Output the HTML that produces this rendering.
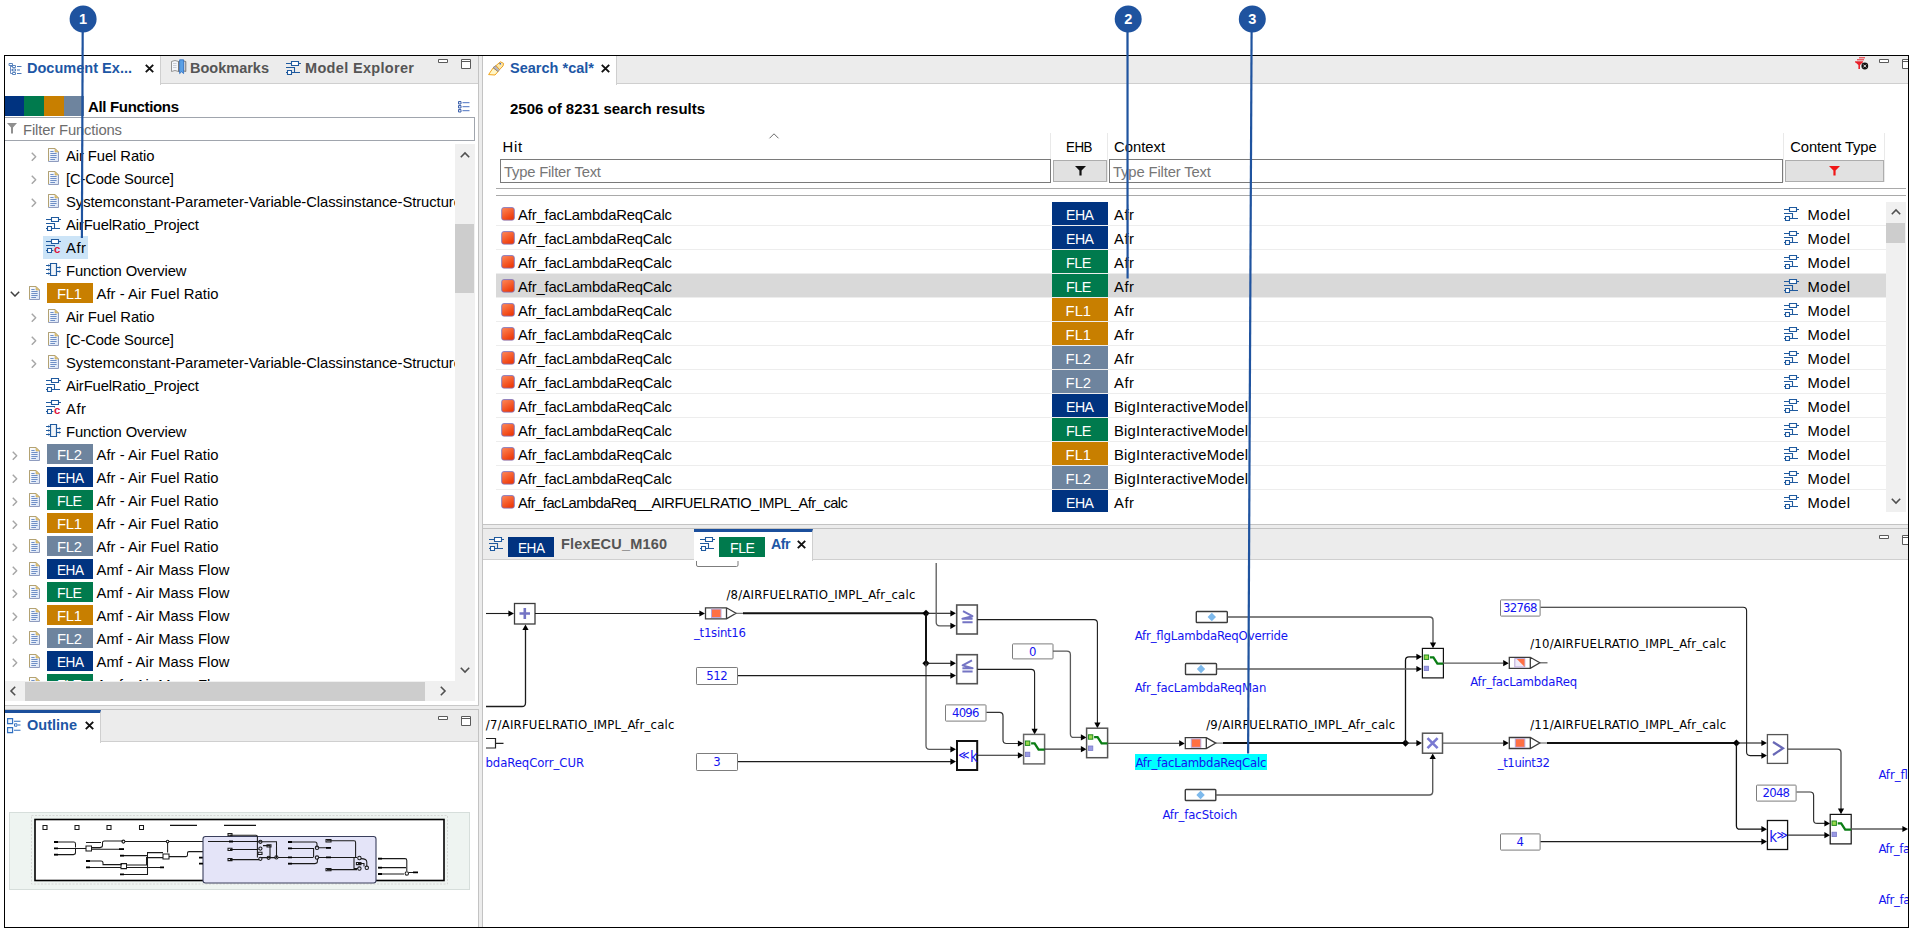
<!DOCTYPE html>
<html lang="en"><head><meta charset="utf-8"><title>Search results and model view</title>
<style>
html,body{margin:0;padding:0;background:#fff;}
body{width:1914px;height:932px;position:relative;overflow:hidden;font-family:"Liberation Sans", Arial, sans-serif;}
div{position:absolute;box-sizing:border-box;}
svg{position:absolute;left:0;top:0;overflow:visible;}
.t{position:absolute;white-space:pre;line-height:20px;font-family:"Liberation Sans", Arial, sans-serif;color:#000;}
.b{font-weight:bold;}
.d{font-family:"DejaVu Sans Condensed", "DejaVu Sans", "Liberation Sans", sans-serif;}
.clip{overflow:hidden;}
</style></head>
<body>
<section aria-label="Document Explorer and Outline">
<svg width="0" height="0" aria-hidden="true"><defs>
<linearGradient id="gDoc" x1="0" y1="0" x2="1" y2="1"><stop offset="0" stop-color="#ffffff"/><stop offset="1" stop-color="#d9e4f6"/></linearGradient>
<linearGradient id="gRed" x1="0" y1="0" x2="0.6" y2="1"><stop offset="0" stop-color="#ff8a5a"/><stop offset="1" stop-color="#ee3a0a"/></linearGradient>
<symbol id="iDoc" viewBox="0 0 11 14"><path d="M0.5 0.5H7L10.5 4V13.5H0.5Z" fill="url(#gDoc)" stroke="#8f9cbf"/><path d="M0.5 13V0.5H7" fill="none" stroke="#b3a272"/><path d="M7 0.5V4H10.5Z" fill="#e3c878" stroke="#c2a65a" stroke-width="0.6"/><path d="M2.3 3.5H5.6M2.3 5.5H8.6M2.3 7.5H8.6M2.3 9.5H8.6M2.3 11.5H7" stroke="#6f8fc6" stroke-width="1" fill="none"/></symbol>
<symbol id="iModel" viewBox="0 0 15 15"><path d="M5.5 0.5H12.5V4.5H5.5Z" fill="#fff" stroke="#1f5a9e" stroke-width="1.1"/><path d="M0 2.5H5.5M12.5 2.5H15M0 6.5H9M8.5 6.5V11.5M5.5 11.5H14M0 11.5H1.5" stroke="#1f5a9e" stroke-width="1.1" fill="none"/><path d="M1.5 9.5H5.5V13.5H1.5Z" fill="#fff" stroke="#1f5a9e" stroke-width="1.1"/></symbol>
<symbol id="iModelC" viewBox="0 0 15 15"><path d="M5.5 0.5H12.5V4.5H5.5Z" fill="#fff" stroke="#1f5a9e" stroke-width="1.1"/><path d="M0 2.5H5.5M12.5 2.5H15M0 6.5H8.5V7.6M0 11.5H1.5M5.5 11.5H7.4" stroke="#1f5a9e" stroke-width="1.1" fill="none"/><path d="M1.5 9.5H5.5V13.5H1.5Z" fill="#fff" stroke="#1f5a9e" stroke-width="1.1"/><text x="8" y="14" font-size="11.4" font-weight="bold" fill="#dc143c" font-family="'Liberation Sans', Arial, sans-serif">c</text></symbol>
<symbol id="iFunc" viewBox="0 0 15 15"><path d="M4.5 0.5H10.5V12.5H4.5Z" fill="#f2f5f9" stroke="#1f5a9e" stroke-width="1.2"/><path d="M0 2.5H4M0 6.5H4M0 10.5H4M10.8 4.5H14.6M10.8 8.5H14.6" stroke="#1f5a9e" stroke-width="1.1"/><path d="M2 1.2L3.9 2.5L2 3.8ZM2 5.2L3.9 6.5L2 7.8ZM2 9.2L3.9 10.5L2 11.8ZM12.9 3.2L14.9 4.5L12.9 5.8ZM12.9 7.2L14.9 8.5L12.9 9.8Z" fill="#1f5a9e"/></symbol>
<symbol id="iChevR" viewBox="0 0 6 10"><path d="M0.8 0.8L5 5L0.8 9.2" fill="none" stroke="#a6a6a6" stroke-width="1.5"/></symbol>
<symbol id="iChevD" viewBox="0 0 10 6"><path d="M0.8 0.8L5 5L9.2 0.8" fill="none" stroke="#404040" stroke-width="1.5"/></symbol>
<symbol id="iClose" viewBox="0 0 9 9"><path d="M0.8 0.8L8.2 8.2M8.2 0.8L0.8 8.2" stroke="#111" stroke-width="1.9" fill="none"/></symbol>
<symbol id="iMin" viewBox="0 0 10 4"><path d="M0.5 0.5H9.5V3.5H0.5Z" fill="#fff" stroke="#5a5a5a"/></symbol>
<symbol id="iMax" viewBox="0 0 10 10"><path d="M0.5 0.5H9.5V9.5H0.5Z" fill="#fff" stroke="#5a5a5a"/><path d="M0.5 2.5H9.5" stroke="#5a5a5a"/></symbol>
<symbol id="iRed" viewBox="0 0 14 14"><rect x="0.6" y="0.6" width="12.8" height="12.8" rx="2.2" fill="url(#gRed)" stroke="#7d78c4" stroke-width="0.9"/></symbol>
</defs></svg>
<div style="left:4px;top:55px;width:1905px;height:873px;border:1px solid #000;"></div>
<div style="left:5px;top:56px;width:473px;height:28px;background:#ececec;border-bottom:1px solid #cfcfcf;"></div>
<div style="left:478px;top:56px;width:1px;height:871px;background:#c3c3c3;"></div>
<div style="left:479px;top:56px;width:3px;height:871px;background:#ececec;"></div>
<div style="left:482px;top:56px;width:1px;height:871px;background:#c3c3c3;"></div>
<div style="left:5px;top:56px;width:156px;height:29px;background:#fff;border-right:1px solid #cfcfcf;"></div>
<svg width="13" height="12" style="left:9px;top:62.5px"><path d="M1.5 0V10.5M1.5 3.5H4M1.5 7H4M1.5 10.5H4" stroke="#6f8fc6" fill="none"/><path d="M0 0.5H3.5V2.5H0ZM3.5 2.5H6.5V4.5H3.5ZM3.5 6H6.5V8H3.5ZM3.5 9.5H6.5V11.5H3.5Z" fill="#fff" stroke="#4a78b8" stroke-width="0.9"/><path d="M8 3.5H12.5M8 7H11M8 10.5H12.5" stroke="#4a78b8"/></svg>
<span class="t b" style="left:27.0px;top:57.6px;font-size:14.5px;letter-spacing:0.020px;color:#1d57a5;">Document Ex...</span>
<svg width="9" height="9" style="left:145px;top:63.5px"><use href="#iClose"/></svg>
<svg width="16" height="16" style="left:171px;top:59px"><path d="M0.5 2.5L4 1.5L7.5 2.5V12.5L4 11.5L0.5 12.5Z" fill="#f4f6fa" stroke="#8a8a8a" stroke-width="0.9"/><path d="M7.5 2.5L11 1.5L14.8 2.5V12.5L11 11.5L7.5 12.5Z" fill="#cfd3da" stroke="#6e6e6e" stroke-width="0.9"/><path d="M8.6 0.8H12.6V14.6L10.6 12.8L8.6 14.6Z" fill="#5aa0e6" stroke="#2b6cc0" stroke-width="0.8"/><path d="M2 4.5H5.5M2 6.5H5.5M2 8.5H5.5" stroke="#b8bcc4" stroke-width="0.7"/></svg>
<span class="t b" style="left:190.0px;top:57.6px;font-size:14.5px;color:#555;">Bookmarks</span>
<svg width="15" height="15" style="left:286px;top:61px"><use href="#iModel"/></svg>
<span class="t b" style="left:305.0px;top:57.6px;font-size:14.5px;letter-spacing:0.328px;color:#555;">Model Explorer</span>
<svg width="10" height="4" style="left:438px;top:59px"><use href="#iMin"/></svg>
<svg width="10" height="10" style="left:461px;top:59px"><use href="#iMax"/></svg>
<div style="left:5px;top:96px;width:19px;height:20px;background:#003380;"></div>
<div style="left:24px;top:96px;width:20px;height:20px;background:#007a4d;"></div>
<div style="left:44px;top:96px;width:20px;height:20px;background:#c87f00;"></div>
<div style="left:64px;top:96px;width:20px;height:20px;background:#6e849e;"></div>
<span class="t b" style="left:88.0px;top:96.8px;font-size:15px;letter-spacing:-0.333px;">All Functions</span>
<svg width="12" height="12" style="left:458px;top:101px"><path d="M0.5 0.5H3V3H0.5ZM0.5 4.5H3V7H0.5ZM0.5 8.5H3V11H0.5Z" fill="#dfe7f5" stroke="#3f63ad"/><path d="M4.5 1.7H11.5M4.5 5.7H11.5M4.5 9.7H11.5" stroke="#4a72c0"/></svg>
<div style="left:5px;top:117px;width:470px;height:24px;background:#fff;border:1px solid #a0a5ad;border-left:none;"></div>
<svg width="10" height="11" style="left:7px;top:123px"><path d="M0 0H10L6 4.5V10.5H4V4.5Z" fill="#8f8f8f"/></svg>
<span class="t" style="left:23.0px;top:119.9px;font-size:14.8px;letter-spacing:-0.144px;color:#6d6d6d;">Filter Functions</span>
<div class="clip" style="left:5px;top:141px;width:450px;height:540px">
<svg width="5.7" height="9.5" style="left:26.2px;top:10.5px"><use href="#iChevR"/></svg>
<svg width="11" height="14" style="left:43px;top:7px"><use href="#iDoc"/></svg>
<span class="t" style="left:61.0px;top:4.9px;font-size:14.8px;letter-spacing:-0.089px;">Air Fuel Ratio</span>
<svg width="5.7" height="9.5" style="left:26.2px;top:33.5px"><use href="#iChevR"/></svg>
<svg width="11" height="14" style="left:43px;top:30px"><use href="#iDoc"/></svg>
<span class="t" style="left:61.0px;top:27.9px;font-size:14.8px;letter-spacing:-0.159px;">[C-Code Source]</span>
<svg width="5.7" height="9.5" style="left:26.2px;top:56.5px"><use href="#iChevR"/></svg>
<svg width="11" height="14" style="left:43px;top:53px"><use href="#iDoc"/></svg>
<span class="t" style="left:61.0px;top:50.9px;font-size:14.8px;letter-spacing:-0.062px;">Systemconstant-Parameter-Variable-Classinstance-Structure</span>
<svg width="15" height="15" style="left:41px;top:76px"><use href="#iModel"/></svg>
<span class="t" style="left:61.0px;top:73.9px;font-size:14.8px;letter-spacing:-0.143px;">AirFuelRatio_Project</span>
<div style="left:38px;top:95px;width:45px;height:23px;background:#cce4f7;"></div>
<svg width="15" height="15" style="left:41px;top:98px"><use href="#iModelC"/></svg>
<span class="t" style="left:61.0px;top:96.9px;font-size:14.8px;letter-spacing:0.544px;">Afr</span>
<svg width="15" height="15" style="left:41px;top:122px"><use href="#iFunc"/></svg>
<span class="t" style="left:61.0px;top:119.9px;font-size:14.8px;letter-spacing:-0.129px;">Function Overview</span>
<svg width="10" height="6" style="left:4.5px;top:149.5px"><use href="#iChevD"/></svg>
<svg width="11" height="14" style="left:24px;top:145px"><use href="#iDoc"/></svg>
<div style="left:42px;top:142px;width:46px;height:20px;background:#c87f00;"></div>
<span class="t" style="left:52.0px;top:142.9px;font-size:14.8px;letter-spacing:-0.252px;color:#fff;">FL1</span>
<span class="t" style="left:91.5px;top:142.9px;font-size:14.8px;letter-spacing:0.058px;">Afr - Air Fuel Ratio</span>
<svg width="5.7" height="9.5" style="left:26.2px;top:171.5px"><use href="#iChevR"/></svg>
<svg width="11" height="14" style="left:43px;top:168px"><use href="#iDoc"/></svg>
<span class="t" style="left:61.0px;top:165.9px;font-size:14.8px;letter-spacing:-0.089px;">Air Fuel Ratio</span>
<svg width="5.7" height="9.5" style="left:26.2px;top:194.5px"><use href="#iChevR"/></svg>
<svg width="11" height="14" style="left:43px;top:191px"><use href="#iDoc"/></svg>
<span class="t" style="left:61.0px;top:188.9px;font-size:14.8px;letter-spacing:-0.159px;">[C-Code Source]</span>
<svg width="5.7" height="9.5" style="left:26.2px;top:217.5px"><use href="#iChevR"/></svg>
<svg width="11" height="14" style="left:43px;top:214px"><use href="#iDoc"/></svg>
<span class="t" style="left:61.0px;top:211.9px;font-size:14.8px;letter-spacing:-0.062px;">Systemconstant-Parameter-Variable-Classinstance-Structure</span>
<svg width="15" height="15" style="left:41px;top:237px"><use href="#iModel"/></svg>
<span class="t" style="left:61.0px;top:234.9px;font-size:14.8px;letter-spacing:-0.143px;">AirFuelRatio_Project</span>
<svg width="15" height="15" style="left:41px;top:259px"><use href="#iModelC"/></svg>
<span class="t" style="left:61.0px;top:257.9px;font-size:14.8px;letter-spacing:0.544px;">Afr</span>
<svg width="15" height="15" style="left:41px;top:283px"><use href="#iFunc"/></svg>
<span class="t" style="left:61.0px;top:280.9px;font-size:14.8px;letter-spacing:-0.129px;">Function Overview</span>
<svg width="5.7" height="9.5" style="left:7.199999999999999px;top:309.5px"><use href="#iChevR"/></svg>
<svg width="11" height="14" style="left:24px;top:306px"><use href="#iDoc"/></svg>
<div style="left:42px;top:303px;width:46px;height:20px;background:#6e849e;"></div>
<span class="t" style="left:52.0px;top:303.9px;font-size:14.8px;letter-spacing:-0.252px;color:#fff;">FL2</span>
<span class="t" style="left:91.5px;top:303.9px;font-size:14.8px;letter-spacing:0.058px;">Afr - Air Fuel Ratio</span>
<svg width="5.7" height="9.5" style="left:7.199999999999999px;top:332.5px"><use href="#iChevR"/></svg>
<svg width="11" height="14" style="left:24px;top:329px"><use href="#iDoc"/></svg>
<div style="left:42px;top:326px;width:46px;height:20px;background:#003380;"></div>
<span class="t" style="left:52.0px;top:326.9px;font-size:14.8px;letter-spacing:-0.500px;color:#fff;transform:scaleX(0.9174);transform-origin:0 0;">EHA</span>
<span class="t" style="left:91.5px;top:326.9px;font-size:14.8px;letter-spacing:0.058px;">Afr - Air Fuel Ratio</span>
<svg width="5.7" height="9.5" style="left:7.199999999999999px;top:355.5px"><use href="#iChevR"/></svg>
<svg width="11" height="14" style="left:24px;top:352px"><use href="#iDoc"/></svg>
<div style="left:42px;top:349px;width:46px;height:20px;background:#007a4d;"></div>
<span class="t" style="left:52.0px;top:349.9px;font-size:14.8px;letter-spacing:-0.500px;color:#fff;transform:scaleX(0.9563);transform-origin:0 0;">FLE</span>
<span class="t" style="left:91.5px;top:349.9px;font-size:14.8px;letter-spacing:0.058px;">Afr - Air Fuel Ratio</span>
<svg width="5.7" height="9.5" style="left:7.199999999999999px;top:378.5px"><use href="#iChevR"/></svg>
<svg width="11" height="14" style="left:24px;top:375px"><use href="#iDoc"/></svg>
<div style="left:42px;top:372px;width:46px;height:20px;background:#c87f00;"></div>
<span class="t" style="left:52.0px;top:372.9px;font-size:14.8px;letter-spacing:-0.252px;color:#fff;">FL1</span>
<span class="t" style="left:91.5px;top:372.9px;font-size:14.8px;letter-spacing:0.058px;">Afr - Air Fuel Ratio</span>
<svg width="5.7" height="9.5" style="left:7.199999999999999px;top:401.5px"><use href="#iChevR"/></svg>
<svg width="11" height="14" style="left:24px;top:398px"><use href="#iDoc"/></svg>
<div style="left:42px;top:395px;width:46px;height:20px;background:#6e849e;"></div>
<span class="t" style="left:52.0px;top:395.9px;font-size:14.8px;letter-spacing:-0.252px;color:#fff;">FL2</span>
<span class="t" style="left:91.5px;top:395.9px;font-size:14.8px;letter-spacing:0.058px;">Afr - Air Fuel Ratio</span>
<svg width="5.7" height="9.5" style="left:7.199999999999999px;top:424.5px"><use href="#iChevR"/></svg>
<svg width="11" height="14" style="left:24px;top:421px"><use href="#iDoc"/></svg>
<div style="left:42px;top:418px;width:46px;height:20px;background:#003380;"></div>
<span class="t" style="left:52.0px;top:418.9px;font-size:14.8px;letter-spacing:-0.500px;color:#fff;transform:scaleX(0.9174);transform-origin:0 0;">EHA</span>
<span class="t" style="left:91.5px;top:418.9px;font-size:14.8px;letter-spacing:0.080px;">Amf - Air Mass Flow</span>
<svg width="5.7" height="9.5" style="left:7.199999999999999px;top:447.5px"><use href="#iChevR"/></svg>
<svg width="11" height="14" style="left:24px;top:444px"><use href="#iDoc"/></svg>
<div style="left:42px;top:441px;width:46px;height:20px;background:#007a4d;"></div>
<span class="t" style="left:52.0px;top:441.9px;font-size:14.8px;letter-spacing:-0.500px;color:#fff;transform:scaleX(0.9563);transform-origin:0 0;">FLE</span>
<span class="t" style="left:91.5px;top:441.9px;font-size:14.8px;letter-spacing:0.080px;">Amf - Air Mass Flow</span>
<svg width="5.7" height="9.5" style="left:7.199999999999999px;top:470.5px"><use href="#iChevR"/></svg>
<svg width="11" height="14" style="left:24px;top:467px"><use href="#iDoc"/></svg>
<div style="left:42px;top:464px;width:46px;height:20px;background:#c87f00;"></div>
<span class="t" style="left:52.0px;top:464.9px;font-size:14.8px;letter-spacing:-0.252px;color:#fff;">FL1</span>
<span class="t" style="left:91.5px;top:464.9px;font-size:14.8px;letter-spacing:0.080px;">Amf - Air Mass Flow</span>
<svg width="5.7" height="9.5" style="left:7.199999999999999px;top:493.5px"><use href="#iChevR"/></svg>
<svg width="11" height="14" style="left:24px;top:490px"><use href="#iDoc"/></svg>
<div style="left:42px;top:487px;width:46px;height:20px;background:#6e849e;"></div>
<span class="t" style="left:52.0px;top:487.9px;font-size:14.8px;letter-spacing:-0.252px;color:#fff;">FL2</span>
<span class="t" style="left:91.5px;top:487.9px;font-size:14.8px;letter-spacing:0.080px;">Amf - Air Mass Flow</span>
<svg width="5.7" height="9.5" style="left:7.199999999999999px;top:516.5px"><use href="#iChevR"/></svg>
<svg width="11" height="14" style="left:24px;top:513px"><use href="#iDoc"/></svg>
<div style="left:42px;top:510px;width:46px;height:20px;background:#003380;"></div>
<span class="t" style="left:52.0px;top:510.9px;font-size:14.8px;letter-spacing:-0.500px;color:#fff;transform:scaleX(0.9174);transform-origin:0 0;">EHA</span>
<span class="t" style="left:91.5px;top:510.9px;font-size:14.8px;letter-spacing:0.080px;">Amf - Air Mass Flow</span>
<svg width="5.7" height="9.5" style="left:7.199999999999999px;top:539.5px"><use href="#iChevR"/></svg>
<svg width="11" height="14" style="left:24px;top:536px"><use href="#iDoc"/></svg>
<div style="left:42px;top:533px;width:46px;height:20px;background:#007a4d;"></div>
<span class="t" style="left:52.0px;top:533.9px;font-size:14.8px;letter-spacing:-0.500px;color:#fff;transform:scaleX(0.9563);transform-origin:0 0;">FLE</span>
<span class="t" style="left:91.5px;top:533.9px;font-size:14.8px;letter-spacing:0.080px;">Amf - Air Mass Flow</span>
</div>
<div style="left:455px;top:144px;width:20px;height:557px;background:#f0f0f0;"></div>
<div style="left:455px;top:224px;width:19px;height:69px;background:#cdcdcd;"></div>
<svg width="10" height="6" style="left:460px;top:152px"><path d="M0.8 5.2L5 1L9.2 5.2" fill="none" stroke="#505050" stroke-width="1.6"/></svg>
<svg width="10" height="6" style="left:460px;top:667px"><path d="M0.8 0.8L5 5L9.2 0.8" fill="none" stroke="#505050" stroke-width="1.6"/></svg>
<div style="left:5px;top:681px;width:450px;height:20px;background:#f0f0f0;"></div>
<div style="left:25px;top:682px;width:400px;height:19px;background:#cdcdcd;"></div>
<svg width="6" height="10" style="left:10px;top:686px"><path d="M5.2 0.8L1 5L5.2 9.2" fill="none" stroke="#505050" stroke-width="1.6"/></svg>
<svg width="6" height="10" style="left:440px;top:686px"><path d="M0.8 0.8L5 5L0.8 9.2" fill="none" stroke="#505050" stroke-width="1.6"/></svg>
<div style="left:5px;top:705px;width:474px;height:1px;background:#c8c8c8;"></div>
<div style="left:5px;top:706px;width:477px;height:3px;background:#ececec;"></div>
<div style="left:5px;top:709px;width:474px;height:1px;background:#c3c3c3;"></div>
<div style="left:5px;top:710px;width:473px;height:32px;background:#ececec;border-bottom:1px solid #cfcfcf;"></div>
<div style="left:5px;top:710px;width:96px;height:33px;background:#fff;border-right:1px solid #cfcfcf;border-top:3px solid #1b4f9c;"></div>
<svg width="14" height="16" style="left:7px;top:718px"><path d="M0.6 0.6H5.6V5.6H0.6ZM0.6 9.6H5.6V14.6H0.6Z" fill="#eef4fc" stroke="#2f6fc0" stroke-width="1.15"/><path d="M7.5 5.8H10V8.2H7.5Z" fill="#fff" stroke="#2f6fc0" stroke-width="0.95"/><path d="M7 3.3H13.5M10.8 7H13.5M7 12.2H13.5" stroke="#2f6fc0" stroke-width="1.1"/></svg>
<span class="t b" style="left:27.0px;top:714.6px;font-size:14.5px;letter-spacing:0.010px;color:#1d57a5;">Outline</span>
<svg width="9" height="9" style="left:85px;top:721px"><use href="#iClose"/></svg>
<svg width="10" height="4" style="left:438px;top:716px"><use href="#iMin"/></svg>
<svg width="10" height="10" style="left:461px;top:716px"><use href="#iMax"/></svg>
</section>
<section aria-label="Search results">
<div style="left:483px;top:56px;width:1425px;height:28px;background:#ececec;border-bottom:1px solid #cfcfcf;"></div>
<div style="left:483px;top:56px;width:134px;height:29px;background:#fff;border-right:1px solid #cfcfcf;"></div>
<svg width="17" height="15" style="left:488px;top:61px"><path d="M0.6 13.6L5.2 6.8L10.2 10.4L7 14Z" fill="#fff6c8" stroke="#f3a61c" stroke-width="1"/><path d="M5 6.6L8 4.6L11.6 8.6L10 10.6Z" fill="#b9b6bd" stroke="#8a7a6a" stroke-width="0.8"/><path d="M8 4.6L12.4 0.8L15.6 2.4L15 5L11.6 8.6Z" fill="#ffe9a8" stroke="#e9a227" stroke-width="1"/><path d="M11.6 3.2L12.8 2.4" stroke="#2b55c5" stroke-width="1.4"/></svg>
<span class="t b" style="left:510.0px;top:57.6px;font-size:14.5px;letter-spacing:0.015px;color:#1d57a5;">Search *cal*</span>
<svg width="9" height="9" style="left:601px;top:63.5px"><use href="#iClose"/></svg>
<svg width="15" height="13" style="left:1854px;top:57px"><path d="M5 0.8H11M3 2.8H10M1 4.8H9" stroke="#e8202a" stroke-width="1"/><path d="M1 5H9L6 8V12H4.4V8Z" fill="#e8202a"/><circle cx="10.8" cy="9" r="3.4" fill="#111"/><path d="M9.4 7.6L12.2 10.4M12.2 7.6L9.4 10.4" stroke="#fff" stroke-width="0.9"/></svg>
<svg width="10" height="4" style="left:1879px;top:59px"><use href="#iMin"/></svg>
<svg width="6" height="10" style="left:1902px;top:59px"><path d="M6 0.5H0.5V9.5H6M0.5 2.5H6" fill="#fff" stroke="#5a5a5a"/></svg>
<span class="t b" style="left:510.0px;top:98.8px;font-size:15px;">2506 of 8231 search results</span>
<div style="left:1050px;top:133px;width:1px;height:49px;background:#e9e9e9;"></div>
<div style="left:1107px;top:133px;width:1px;height:49px;background:#e9e9e9;"></div>
<div style="left:1783px;top:133px;width:1px;height:49px;background:#e9e9e9;"></div>
<div style="left:1884px;top:133px;width:1px;height:49px;background:#e9e9e9;"></div>
<span class="t" style="left:502.5px;top:136.9px;font-size:14.8px;letter-spacing:0.706px;">Hit</span>
<svg width="10" height="6" style="left:768.5px;top:133px"><path d="M0.5 5.3L5 0.8L9.5 5.3" fill="none" stroke="#6a6a6a" stroke-width="1"/></svg>
<span class="t" style="left:1065.5px;top:136.9px;font-size:14.8px;letter-spacing:-0.500px;transform:scaleX(0.9004);transform-origin:0 0;">EHB</span>
<span class="t" style="left:1114.0px;top:136.9px;font-size:14.8px;">Context</span>
<span class="t" style="left:1790.3px;top:136.9px;font-size:14.8px;letter-spacing:-0.124px;">Content Type</span>
<div style="left:500px;top:159px;width:551px;height:24px;background:#fff;border:1px solid #7a7a7a;"></div>
<span class="t" style="left:504.0px;top:162.4px;font-size:14.8px;letter-spacing:-0.205px;color:#767676;">Type Filter Text</span>
<div style="left:1053px;top:160px;width:54px;height:22px;background:#e1e1e1;border:1px solid #adadad;"></div>
<svg width="11" height="10" style="left:1074.5px;top:166px"><path d="M0 0H11L6.6 4.4V9.6H4.4V4.4Z" fill="#111"/></svg>
<div style="left:1109px;top:159px;width:674px;height:24px;background:#fff;border:1px solid #7a7a7a;"></div>
<span class="t" style="left:1113.0px;top:162.4px;font-size:14.8px;letter-spacing:-0.138px;color:#767676;">Type Filter Text</span>
<div style="left:1785px;top:160px;width:99px;height:22px;background:#e1e1e1;border:1px solid #adadad;"></div>
<svg width="11" height="10" style="left:1828.5px;top:166px"><path d="M0 0H11L6.6 4.4V9.6H4.4V4.4Z" fill="#f01616"/></svg>
<div style="left:496px;top:188px;width:1410px;height:1px;background:#a9a9a9;"></div>
<div style="left:496px;top:195px;width:1410px;height:1px;background:#a9a9a9;"></div>
<div style="left:496px;top:225px;width:1390px;height:1px;background:#ededed;"></div>
<svg width="14" height="13.8" style="left:501px;top:207.3px"><use href="#iRed"/></svg>
<span class="t" style="left:518.0px;top:204.9px;font-size:14.8px;letter-spacing:-0.165px;">Afr_facLambdaReqCalc</span>
<div style="left:1052px;top:202px;width:56px;height:23px;background:#003380;"></div>
<span class="t" style="left:1065.6px;top:204.9px;font-size:14.8px;letter-spacing:-0.500px;color:#fff;transform:scaleX(0.9514);transform-origin:0 0;">EHA</span>
<span class="t" style="left:1114.0px;top:204.9px;font-size:14.8px;letter-spacing:0.544px;">Afr</span>
<svg width="15" height="15" style="left:1784px;top:207px"><use href="#iModel"/></svg>
<span class="t" style="left:1807.5px;top:204.9px;font-size:14.8px;letter-spacing:0.548px;">Model</span>
<div style="left:496px;top:249px;width:1390px;height:1px;background:#ededed;"></div>
<svg width="14" height="13.8" style="left:501px;top:231.3px"><use href="#iRed"/></svg>
<span class="t" style="left:518.0px;top:228.9px;font-size:14.8px;letter-spacing:-0.165px;">Afr_facLambdaReqCalc</span>
<div style="left:1052px;top:226px;width:56px;height:23px;background:#003380;"></div>
<span class="t" style="left:1065.6px;top:228.9px;font-size:14.8px;letter-spacing:-0.500px;color:#fff;transform:scaleX(0.9514);transform-origin:0 0;">EHA</span>
<span class="t" style="left:1114.0px;top:228.9px;font-size:14.8px;letter-spacing:0.544px;">Afr</span>
<svg width="15" height="15" style="left:1784px;top:231px"><use href="#iModel"/></svg>
<span class="t" style="left:1807.5px;top:228.9px;font-size:14.8px;letter-spacing:0.548px;">Model</span>
<div style="left:496px;top:273px;width:1390px;height:1px;background:#ededed;"></div>
<svg width="14" height="13.8" style="left:501px;top:255.3px"><use href="#iRed"/></svg>
<span class="t" style="left:518.0px;top:252.9px;font-size:14.8px;letter-spacing:-0.165px;">Afr_facLambdaReqCalc</span>
<div style="left:1052px;top:250px;width:56px;height:23px;background:#007a4d;"></div>
<span class="t" style="left:1065.6px;top:252.9px;font-size:14.8px;letter-spacing:-0.500px;color:#fff;transform:scaleX(0.9754);transform-origin:0 0;">FLE</span>
<span class="t" style="left:1114.0px;top:252.9px;font-size:14.8px;letter-spacing:0.544px;">Afr</span>
<svg width="15" height="15" style="left:1784px;top:255px"><use href="#iModel"/></svg>
<span class="t" style="left:1807.5px;top:252.9px;font-size:14.8px;letter-spacing:0.548px;">Model</span>
<div style="left:496px;top:274px;width:1390px;height:24px;background:#d9d9d9;"></div>
<div style="left:496px;top:297px;width:1390px;height:1px;background:#ededed;"></div>
<svg width="14" height="13.8" style="left:501px;top:279.3px"><use href="#iRed"/></svg>
<span class="t" style="left:518.0px;top:276.9px;font-size:14.8px;letter-spacing:-0.165px;">Afr_facLambdaReqCalc</span>
<div style="left:1052px;top:274px;width:56px;height:23px;background:#007a4d;"></div>
<span class="t" style="left:1065.6px;top:276.9px;font-size:14.8px;letter-spacing:-0.500px;color:#fff;transform:scaleX(0.9754);transform-origin:0 0;">FLE</span>
<span class="t" style="left:1114.0px;top:276.9px;font-size:14.8px;letter-spacing:0.544px;">Afr</span>
<svg width="15" height="15" style="left:1784px;top:279px"><use href="#iModel"/></svg>
<span class="t" style="left:1807.5px;top:276.9px;font-size:14.8px;letter-spacing:0.548px;">Model</span>
<div style="left:496px;top:321px;width:1390px;height:1px;background:#ededed;"></div>
<svg width="14" height="13.8" style="left:501px;top:303.3px"><use href="#iRed"/></svg>
<span class="t" style="left:518.0px;top:300.9px;font-size:14.8px;letter-spacing:-0.165px;">Afr_facLambdaReqCalc</span>
<div style="left:1052px;top:298px;width:56px;height:23px;background:#c87f00;"></div>
<span class="t" style="left:1065.6px;top:300.9px;font-size:14.8px;color:#fff;">FL1</span>
<span class="t" style="left:1114.0px;top:300.9px;font-size:14.8px;letter-spacing:0.544px;">Afr</span>
<svg width="15" height="15" style="left:1784px;top:303px"><use href="#iModel"/></svg>
<span class="t" style="left:1807.5px;top:300.9px;font-size:14.8px;letter-spacing:0.548px;">Model</span>
<div style="left:496px;top:345px;width:1390px;height:1px;background:#ededed;"></div>
<svg width="14" height="13.8" style="left:501px;top:327.3px"><use href="#iRed"/></svg>
<span class="t" style="left:518.0px;top:324.9px;font-size:14.8px;letter-spacing:-0.165px;">Afr_facLambdaReqCalc</span>
<div style="left:1052px;top:322px;width:56px;height:23px;background:#c87f00;"></div>
<span class="t" style="left:1065.6px;top:324.9px;font-size:14.8px;color:#fff;">FL1</span>
<span class="t" style="left:1114.0px;top:324.9px;font-size:14.8px;letter-spacing:0.544px;">Afr</span>
<svg width="15" height="15" style="left:1784px;top:327px"><use href="#iModel"/></svg>
<span class="t" style="left:1807.5px;top:324.9px;font-size:14.8px;letter-spacing:0.548px;">Model</span>
<div style="left:496px;top:369px;width:1390px;height:1px;background:#ededed;"></div>
<svg width="14" height="13.8" style="left:501px;top:351.3px"><use href="#iRed"/></svg>
<span class="t" style="left:518.0px;top:348.9px;font-size:14.8px;letter-spacing:-0.165px;">Afr_facLambdaReqCalc</span>
<div style="left:1052px;top:346px;width:56px;height:23px;background:#6e849e;"></div>
<span class="t" style="left:1065.6px;top:348.9px;font-size:14.8px;color:#fff;">FL2</span>
<span class="t" style="left:1114.0px;top:348.9px;font-size:14.8px;letter-spacing:0.544px;">Afr</span>
<svg width="15" height="15" style="left:1784px;top:351px"><use href="#iModel"/></svg>
<span class="t" style="left:1807.5px;top:348.9px;font-size:14.8px;letter-spacing:0.548px;">Model</span>
<div style="left:496px;top:393px;width:1390px;height:1px;background:#ededed;"></div>
<svg width="14" height="13.8" style="left:501px;top:375.3px"><use href="#iRed"/></svg>
<span class="t" style="left:518.0px;top:372.9px;font-size:14.8px;letter-spacing:-0.165px;">Afr_facLambdaReqCalc</span>
<div style="left:1052px;top:370px;width:56px;height:23px;background:#6e849e;"></div>
<span class="t" style="left:1065.6px;top:372.9px;font-size:14.8px;color:#fff;">FL2</span>
<span class="t" style="left:1114.0px;top:372.9px;font-size:14.8px;letter-spacing:0.544px;">Afr</span>
<svg width="15" height="15" style="left:1784px;top:375px"><use href="#iModel"/></svg>
<span class="t" style="left:1807.5px;top:372.9px;font-size:14.8px;letter-spacing:0.548px;">Model</span>
<div style="left:496px;top:417px;width:1390px;height:1px;background:#ededed;"></div>
<svg width="14" height="13.8" style="left:501px;top:399.3px"><use href="#iRed"/></svg>
<span class="t" style="left:518.0px;top:396.9px;font-size:14.8px;letter-spacing:-0.165px;">Afr_facLambdaReqCalc</span>
<div style="left:1052px;top:394px;width:56px;height:23px;background:#003380;"></div>
<span class="t" style="left:1065.6px;top:396.9px;font-size:14.8px;letter-spacing:-0.500px;color:#fff;transform:scaleX(0.9514);transform-origin:0 0;">EHA</span>
<span class="t" style="left:1114.0px;top:396.9px;font-size:14.8px;letter-spacing:0.223px;">BigInteractiveModel</span>
<svg width="15" height="15" style="left:1784px;top:399px"><use href="#iModel"/></svg>
<span class="t" style="left:1807.5px;top:396.9px;font-size:14.8px;letter-spacing:0.548px;">Model</span>
<div style="left:496px;top:441px;width:1390px;height:1px;background:#ededed;"></div>
<svg width="14" height="13.8" style="left:501px;top:423.3px"><use href="#iRed"/></svg>
<span class="t" style="left:518.0px;top:420.9px;font-size:14.8px;letter-spacing:-0.165px;">Afr_facLambdaReqCalc</span>
<div style="left:1052px;top:418px;width:56px;height:23px;background:#007a4d;"></div>
<span class="t" style="left:1065.6px;top:420.9px;font-size:14.8px;letter-spacing:-0.500px;color:#fff;transform:scaleX(0.9754);transform-origin:0 0;">FLE</span>
<span class="t" style="left:1114.0px;top:420.9px;font-size:14.8px;letter-spacing:0.223px;">BigInteractiveModel</span>
<svg width="15" height="15" style="left:1784px;top:423px"><use href="#iModel"/></svg>
<span class="t" style="left:1807.5px;top:420.9px;font-size:14.8px;letter-spacing:0.548px;">Model</span>
<div style="left:496px;top:465px;width:1390px;height:1px;background:#ededed;"></div>
<svg width="14" height="13.8" style="left:501px;top:447.3px"><use href="#iRed"/></svg>
<span class="t" style="left:518.0px;top:444.9px;font-size:14.8px;letter-spacing:-0.165px;">Afr_facLambdaReqCalc</span>
<div style="left:1052px;top:442px;width:56px;height:23px;background:#c87f00;"></div>
<span class="t" style="left:1065.6px;top:444.9px;font-size:14.8px;color:#fff;">FL1</span>
<span class="t" style="left:1114.0px;top:444.9px;font-size:14.8px;letter-spacing:0.223px;">BigInteractiveModel</span>
<svg width="15" height="15" style="left:1784px;top:447px"><use href="#iModel"/></svg>
<span class="t" style="left:1807.5px;top:444.9px;font-size:14.8px;letter-spacing:0.548px;">Model</span>
<div style="left:496px;top:489px;width:1390px;height:1px;background:#ededed;"></div>
<svg width="14" height="13.8" style="left:501px;top:471.3px"><use href="#iRed"/></svg>
<span class="t" style="left:518.0px;top:468.9px;font-size:14.8px;letter-spacing:-0.165px;">Afr_facLambdaReqCalc</span>
<div style="left:1052px;top:466px;width:56px;height:23px;background:#6e849e;"></div>
<span class="t" style="left:1065.6px;top:468.9px;font-size:14.8px;color:#fff;">FL2</span>
<span class="t" style="left:1114.0px;top:468.9px;font-size:14.8px;letter-spacing:0.223px;">BigInteractiveModel</span>
<svg width="15" height="15" style="left:1784px;top:471px"><use href="#iModel"/></svg>
<span class="t" style="left:1807.5px;top:468.9px;font-size:14.8px;letter-spacing:0.548px;">Model</span>
<svg width="14" height="13.8" style="left:501px;top:495.3px"><use href="#iRed"/></svg>
<span class="t" style="left:518.0px;top:492.9px;font-size:14.8px;letter-spacing:-0.500px;transform:scaleX(0.9893);transform-origin:0 0;">Afr_facLambdaReq__AIRFUELRATIO_IMPL_Afr_calc</span>
<div style="left:1052px;top:490px;width:56px;height:22px;background:#003380;"></div>
<span class="t" style="left:1065.6px;top:492.9px;font-size:14.8px;letter-spacing:-0.500px;color:#fff;transform:scaleX(0.9514);transform-origin:0 0;">EHA</span>
<span class="t" style="left:1114.0px;top:492.9px;font-size:14.8px;letter-spacing:0.544px;">Afr</span>
<svg width="15" height="15" style="left:1784px;top:495px"><use href="#iModel"/></svg>
<span class="t" style="left:1807.5px;top:492.9px;font-size:14.8px;letter-spacing:0.548px;">Model</span>
<div style="left:1886px;top:202px;width:20px;height:310px;background:#f0f0f0;"></div>
<div style="left:1886px;top:223px;width:19px;height:20px;background:#cdcdcd;"></div>
<svg width="10" height="6" style="left:1890.5px;top:209px"><path d="M0.8 5.2L5 1L9.2 5.2" fill="none" stroke="#505050" stroke-width="1.6"/></svg>
<svg width="10" height="6" style="left:1890.5px;top:498px"><path d="M0.8 0.8L5 5L9.2 0.8" fill="none" stroke="#505050" stroke-width="1.6"/></svg>
<div style="left:483px;top:524px;width:1425px;height:1px;background:#c3c3c3;"></div>
<div style="left:483px;top:525px;width:1425px;height:3px;background:#ececec;"></div>
<div style="left:483px;top:528px;width:1425px;height:1px;background:#c3c3c3;"></div>
</section>
<section aria-label="Model diagram Afr">
<div style="left:483px;top:529px;width:1425px;height:31px;background:#ececec;border-bottom:1px solid #cfcfcf;"></div>
<svg width="15" height="15" style="left:489px;top:537px"><use href="#iModel"/></svg>
<div style="left:508px;top:537px;width:46px;height:20px;background:#003380;"></div>
<span class="t" style="left:517.5px;top:537.9px;font-size:14.8px;letter-spacing:-0.500px;color:#fff;transform:scaleX(0.9174);transform-origin:0 0;">EHA</span>
<span class="t b" style="left:561.0px;top:534.0px;font-size:14.5px;letter-spacing:0.185px;color:#555;">FlexECU_M160</span>
<div style="left:694px;top:529px;width:119px;height:32px;background:#fff;border-right:1px solid #cfcfcf;border-top:3px solid #1b4f9c;"></div>
<svg width="15" height="15" style="left:700px;top:537px"><use href="#iModel"/></svg>
<div style="left:719px;top:537px;width:46px;height:20px;background:#007a4d;"></div>
<span class="t" style="left:729.5px;top:537.9px;font-size:14.8px;letter-spacing:-0.500px;color:#fff;transform:scaleX(0.9563);transform-origin:0 0;">FLE</span>
<span class="t b" style="left:771.0px;top:534.0px;font-size:14.5px;letter-spacing:-0.500px;color:#1d57a5;transform:scaleX(0.9778);transform-origin:0 0;">Afr</span>
<svg width="9" height="9" style="left:797px;top:540px"><use href="#iClose"/></svg>
<svg width="10" height="4" style="left:1879px;top:535px"><use href="#iMin"/></svg>
<svg width="6" height="10" style="left:1902px;top:535px"><path d="M6 0.5H0.5V9.5H6M0.5 2.5H6" fill="#fff" stroke="#5a5a5a"/></svg>
<div class="clip" style="left:483px;top:561px;width:1425px;height:366px;background:#fff">
<svg width="1425" height="366" viewBox="483 561 1425 366" style="font-family:'DejaVu Sans Condensed', 'DejaVu Sans', 'Liberation Sans', sans-serif">
<path d="M486 613.5 L509 613.5" fill="none" stroke="#1c1c1c" stroke-width="1.1"/>
<polygon points="514,613.5 508.4,610.4 508.4,616.6" fill="#000"/>
<rect x="514.5" y="603.5" width="20.5" height="20.5" fill="#fff" stroke="#3c3c3c" stroke-width="1.3"/>
<path d="M519.5 613.5H530M524.8 608V619" stroke="#7474c4" stroke-width="2.6" fill="none"/>
<path d="M535 613.5 L700 613.5" fill="none" stroke="#1c1c1c" stroke-width="1.1"/>
<polygon points="705,613.5 699.4,610.4 699.4,616.6" fill="#000"/>
<path d="M486 706.5 L522.0 706.5 Q525.5 706.5 525.5 703.0 L525.5 628" fill="none" stroke="#1c1c1c" stroke-width="1.3"/>
<polygon points="525.5,624.5 522.4,630.1 528.6,630.1" fill="#000"/>
<path d="M705.5 607.8H726.5L736.0 613.3L726.5 618.8H705.5Z M726.5 607.8V618.8" fill="#fff" stroke="#3c3c3c" stroke-width="1.3" stroke-linejoin="miter"/>
<rect x="711.5" y="609.0999999999999" width="9.5" height="8.4" fill="#ff7043" stroke="#b8a6d8" stroke-width="1"/>
<path d="M736 613.3 L744 613.3" fill="none" stroke="#5a5a5a" stroke-width="1"/>
<path d="M743 613.3 L926 613.3" fill="none" stroke="#111" stroke-width="2"/>
<polygon points="922.4,613.3 926,609.6999999999999 929.6,613.3 926,616.9" fill="#000"/>
<polygon points="922.4,663.3 926,659.6999999999999 929.6,663.3 926,666.9" fill="#000"/>
<path d="M926 613.3 L926 663.3" fill="none" stroke="#111" stroke-width="2"/>
<path d="M926 663.3 L926.0 745.8 Q926 749.3 929.5 749.3 L951 749.3" fill="none" stroke="#5a5a5a" stroke-width="1.3"/>
<polygon points="956,749.3 950.4,746.1999999999999 950.4,752.4" fill="#000"/>
<path d="M926 613.3 L951 613.3" fill="none" stroke="#1c1c1c" stroke-width="1.1"/>
<polygon points="956,613.3 950.4,610.1999999999999 950.4,616.4" fill="#000"/>
<path d="M926 663.3 L951 663.3" fill="none" stroke="#1c1c1c" stroke-width="1.1"/>
<polygon points="956,663.3 950.4,660.1999999999999 950.4,666.4" fill="#000"/>
<path d="M936.2 563 L936.2 622.3 Q936.2 625.8 939.7 625.8 L951 625.8" fill="none" stroke="#5a5a5a" stroke-width="1.3"/>
<polygon points="956,625.8 950.4,622.6999999999999 950.4,628.9" fill="#000"/>
<rect x="696.5" y="545" width="41.5" height="21.5" rx="1.5" fill="#fff" stroke="#7d7d7d"/>
<rect x="956.7" y="605" width="20.6" height="29" fill="#fff" stroke="#555" stroke-width="1.6"/>
<path d="M963 611.2L972.4 616.2L962.4 618.8H972.6M962.4 622.2H972.6" fill="none" stroke="#7474c4" stroke-width="2" stroke-linejoin="round"/>
<rect x="956.7" y="654.7" width="20.6" height="29" fill="#fff" stroke="#555" stroke-width="1.6"/>
<path d="M972 660.4L962.6 665.4L972.6 668.2H962.4M962.4 671.6H972.6" fill="none" stroke="#7474c4" stroke-width="2" stroke-linejoin="round"/>
<path d="M977.5 619.6 L1093.9 619.6 Q1097.4 619.6 1097.4 623.1 L1097.4 723" fill="none" stroke="#1c1c1c" stroke-width="1.1"/>
<polygon points="1097.4,728.2 1094.3000000000002,722.6 1100.5,722.6" fill="#000"/>
<path d="M977.5 669.4 L1031.1 669.4 Q1034.6 669.4 1034.6 672.9 L1034.6 729" fill="none" stroke="#1c1c1c" stroke-width="1.1"/>
<polygon points="1034.6,734.4 1031.5,728.8 1037.6999999999998,728.8" fill="#000"/>
<rect x="696.5" y="667.5" width="41" height="17" rx="0.7" fill="#fff" stroke="#7d7d7d" stroke-width="1"/>
<text x="706.25" y="680.1" font-size="13" fill="#1414f0" text-anchor="start" textLength="21.5" lengthAdjust="spacing">512</text>
<path d="M738 675.6 L951 675.6" fill="none" stroke="#1c1c1c" stroke-width="1.1"/>
<polygon points="956,675.6 950.4,672.5 950.4,678.7" fill="#000"/>
<rect x="696.5" y="753.5" width="41" height="17" rx="0.7" fill="#fff" stroke="#7d7d7d" stroke-width="1"/>
<text x="713.25" y="766.1" font-size="13" fill="#1414f0" text-anchor="start" textLength="7.5" lengthAdjust="spacing">3</text>
<path d="M738 761.6 L951 761.6" fill="none" stroke="#1c1c1c" stroke-width="1.1"/>
<polygon points="956,761.6 950.4,758.5 950.4,764.7" fill="#000"/>
<rect x="1012.5" y="643.9" width="40.5" height="15" rx="0.7" fill="#fff" stroke="#7d7d7d" stroke-width="1"/>
<text x="1029.0" y="655.6" font-size="13" fill="#1414f0" text-anchor="start" textLength="7.5" lengthAdjust="spacing">0</text>
<path d="M1053 651.2 L1066.9 651.2 Q1070.4 651.2 1070.4 654.7 L1070.4 733.9 Q1070.4 737.4 1073.9 737.4 L1081 737.4" fill="none" stroke="#5a5a5a" stroke-width="1.3"/>
<polygon points="1086.5,737.4 1080.9,734.3 1080.9,740.5" fill="#000"/>
<rect x="945.5" y="704.9" width="40.5" height="16.2" rx="0.7" fill="#fff" stroke="#7d7d7d" stroke-width="1"/>
<text x="952.0" y="716.7" font-size="13" fill="#1414f0" text-anchor="start" textLength="27.5" lengthAdjust="spacing">4096</text>
<path d="M986.5 712.4 L999.5 712.4 Q1003 712.4 1003.0 715.9 L1003.0 740.0 Q1003 743.5 1006.5 743.5 L1018 743.5" fill="none" stroke="#333" stroke-width="1.2"/>
<polygon points="1023.5,743.5 1017.9,740.4 1017.9,746.6" fill="#000"/>
<rect x="957" y="741" width="20.2" height="29" fill="#fff" stroke="#111" stroke-width="2"/>
<text x="958.3" y="759.2" font-size="12" fill="#1414f0" text-anchor="start" textLength="10.5" lengthAdjust="spacing">≪</text>
<text x="970" y="761.6" font-size="15" fill="#1414f0" text-anchor="start">k</text>
<path d="M977.5 755.3 L1018 755.3" fill="none" stroke="#1c1c1c" stroke-width="1.1"/>
<polygon points="1023.5,755.3 1017.9,752.1999999999999 1017.9,758.4" fill="#000"/>
<rect x="1023.6" y="734.4" width="21" height="29.5" fill="#fff" stroke="#666" stroke-width="1.5"/>
<rect x="1025.4" y="741.0" width="4.4" height="4.4" fill="#9ad84a" stroke="#1f8a1f" stroke-width="1"/>
<rect x="1025.4" y="752.1999999999999" width="4.4" height="4.4" fill="#9a9ae4" stroke="#7a7ac8" stroke-width="0.8"/>
<path d="M1031.1 743.4H1034.6L1038.6 749.6H1044.6" fill="none" stroke="#0a7d14" stroke-width="2.3"/>
<path d="M1044.6 749.2 L1081 749.2" fill="none" stroke="#333" stroke-width="1.2"/>
<polygon points="1086.5,749.2 1080.9,746.1 1080.9,752.3000000000001" fill="#000"/>
<rect x="1086.6" y="728.2" width="21" height="29.5" fill="#fff" stroke="#555" stroke-width="1.5"/>
<rect x="1088.3999999999999" y="734.8000000000001" width="4.4" height="4.4" fill="#9ad84a" stroke="#1f8a1f" stroke-width="1"/>
<rect x="1088.3999999999999" y="746.0" width="4.4" height="4.4" fill="#9a9ae4" stroke="#7a7ac8" stroke-width="0.8"/>
<path d="M1094.1 737.2H1097.6L1101.6 743.4000000000001H1107.6" fill="none" stroke="#0a7d14" stroke-width="2.3"/>
<path d="M1107.6 743.4 L1179 743.4" fill="none" stroke="#5a5a5a" stroke-width="1.3"/>
<polygon points="1184.8,743.4 1179.2,740.3 1179.2,746.5" fill="#000"/>
<path d="M1185.3 737.6H1206.3L1215.8 743.1L1206.3 748.6H1185.3Z M1206.3 737.6V748.6" fill="#fff" stroke="#3c3c3c" stroke-width="1.3" stroke-linejoin="miter"/>
<rect x="1191.3" y="738.9" width="9.5" height="8.4" fill="#ff7043" stroke="#b8a6d8" stroke-width="1"/>
<path d="M1216 743.1 L1224 743.1" fill="none" stroke="#5a5a5a" stroke-width="1"/>
<path d="M1223 743.1 L1405.5 743.1" fill="none" stroke="#111" stroke-width="2"/>
<polygon points="1401.9,743.1 1405.5,739.5 1409.1,743.1 1405.5,746.7" fill="#000"/>
<path d="M1405.5 743.1 L1417 743.1" fill="none" stroke="#1c1c1c" stroke-width="1.1"/>
<polygon points="1422,743.1 1416.4,740.0 1416.4,746.2" fill="#000"/>
<path d="M1405.5 743.1 L1405.5 660.3 Q1405.5 656.8 1409.0 656.8 L1417 656.8" fill="none" stroke="#111" stroke-width="1.3"/>
<polygon points="1422,656.8 1416.4,653.6999999999999 1416.4,659.9" fill="#000"/>
<rect x="1196.3" y="611.5" width="31" height="11" rx="0.8" fill="#fff" stroke="#3c3c3c" stroke-width="1.4"/>
<polygon points="1207.6,617 1211.8,612.8 1216.0,617 1211.8,621.2" fill="#7db9ec"/>
<path d="M1227.5 617 L1429.5 617.0 Q1433 617 1433.0 620.5 L1433 643" fill="none" stroke="#5a5a5a" stroke-width="1.4"/>
<polygon points="1433,648.2 1429.9,642.6 1436.1,642.6" fill="#000"/>
<rect x="1185.5" y="663.5" width="31" height="11" rx="0.8" fill="#fff" stroke="#3c3c3c" stroke-width="1.4"/>
<polygon points="1196.8,669 1201.0,664.8 1205.2,669 1201.0,673.2" fill="#7db9ec"/>
<path d="M1216.5 669 L1417 669" fill="none" stroke="#5a5a5a" stroke-width="1.4"/>
<polygon points="1422,669 1416.4,665.9 1416.4,672.1" fill="#000"/>
<rect x="1185.3" y="789.5" width="30.5" height="11" rx="0.8" fill="#fff" stroke="#3c3c3c" stroke-width="1.4"/>
<polygon points="1196.35,795 1200.55,790.8 1204.75,795 1200.55,799.2" fill="#7db9ec"/>
<path d="M1216 795 L1429.2 795.0 Q1432.7 795 1432.7 791.5 L1432.7 758" fill="none" stroke="#5a5a5a" stroke-width="1.4"/>
<polygon points="1432.7,753.4 1429.6000000000001,759.0 1435.8,759.0" fill="#000"/>
<rect x="1422.5" y="733.2" width="20" height="20" fill="#fff" stroke="#555" stroke-width="1.5"/>
<path d="M1427.5 738.2L1437.6 748.2M1437.6 738.2L1427.5 748.2" stroke="#7a7ad2" stroke-width="2.6" fill="none"/>
<path d="M1443 743.1 L1503 743.1" fill="none" stroke="#5a5a5a" stroke-width="1.3"/>
<polygon points="1508.8,743.1 1503.2,740.0 1503.2,746.2" fill="#000"/>
<path d="M1509.3 737.5H1530.3L1539.8 743L1530.3 748.5H1509.3Z M1530.3 737.5V748.5" fill="#fff" stroke="#3c3c3c" stroke-width="1.3" stroke-linejoin="miter"/>
<rect x="1515.3" y="738.8" width="9.5" height="8.4" fill="#ff7043" stroke="#b8a6d8" stroke-width="1"/>
<path d="M1540 743 L1548 743" fill="none" stroke="#5a5a5a" stroke-width="1"/>
<path d="M1547 743 L1736.4 743" fill="none" stroke="#111" stroke-width="2"/>
<polygon points="1732.8000000000002,743 1736.4,739.4 1740.0,743 1736.4,746.6" fill="#000"/>
<path d="M1736.4 743 L1762 743" fill="none" stroke="#1c1c1c" stroke-width="1.1"/>
<polygon points="1767,743 1761.4,739.9 1761.4,746.1" fill="#000"/>
<path d="M1736.4 743 L1736.4 825.7 Q1736.4 829.2 1739.9 829.2 L1762 829.2" fill="none" stroke="#111" stroke-width="1.3"/>
<polygon points="1767,829.2 1761.4,826.1 1761.4,832.3000000000001" fill="#000"/>
<rect x="1422.4" y="648.4" width="21" height="29.5" fill="#fff" stroke="#111" stroke-width="1.2"/>
<rect x="1424.2" y="655.0" width="4.4" height="4.4" fill="#9ad84a" stroke="#1f8a1f" stroke-width="1"/>
<rect x="1424.2" y="666.1999999999999" width="4.4" height="4.4" fill="#9a9ae4" stroke="#7a7ac8" stroke-width="0.8"/>
<path d="M1429.9 657.4H1433.4L1437.4 663.6H1443.4" fill="none" stroke="#0a7d14" stroke-width="2.3"/>
<path d="M1443 663.2 L1503 663.2" fill="none" stroke="#5a5a5a" stroke-width="1.3"/>
<polygon points="1508.8,663.2 1503.2,660.1 1503.2,666.3000000000001" fill="#000"/>
<path d="M1509.3 657.3H1530.3L1539.8 662.8L1530.3 668.3H1509.3Z M1530.3 657.3V668.3" fill="#fff" stroke="#3c3c3c" stroke-width="1.3" stroke-linejoin="miter"/>
<rect x="1514.8" y="658.5999999999999" width="10" height="8.4" fill="#efeaf8" stroke="#b8a6d8" stroke-width="1"/>
<polygon points="1516.8,658.9 1524.5,658.9 1524.5,666.6999999999999" fill="#ff7043"/>
<path d="M1540 662.8 L1547.5 662.8" fill="none" stroke="#5a5a5a" stroke-width="1.2"/>
<rect x="1500.5" y="599.9" width="39.6" height="16.2" rx="0.7" fill="#fff" stroke="#7d7d7d" stroke-width="1"/>
<text x="1503.05" y="611.7" font-size="13" fill="#1414f0" text-anchor="start" textLength="34.5" lengthAdjust="spacing">32768</text>
<path d="M1540.6 607.2 L1743.1 607.2 Q1746.6 607.2 1746.6 610.7 L1746.6 752.1 Q1746.6 755.6 1750.1 755.6 L1762 755.6" fill="none" stroke="#1c1c1c" stroke-width="1.1"/>
<polygon points="1767,755.6 1761.4,752.5 1761.4,758.7" fill="#000"/>
<rect x="1767.4" y="734.6" width="20.2" height="28.8" fill="#fff" stroke="#555" stroke-width="1.3"/>
<path d="M1773 742L1783 748.2L1773 755" fill="none" stroke="#6868b6" stroke-width="2.2"/>
<path d="M1788 749.2 L1837.5 749.2 Q1841 749.2 1841.0 752.7 L1841 809" fill="none" stroke="#444" stroke-width="1.3"/>
<polygon points="1841,814.2 1837.9,808.6 1844.1,808.6" fill="#000"/>
<rect x="1756.5" y="785.1" width="39.6" height="16" rx="0.7" fill="#fff" stroke="#7d7d7d" stroke-width="1"/>
<text x="1762.55" y="796.7" font-size="13" fill="#1414f0" text-anchor="start" textLength="27.5" lengthAdjust="spacing">2048</text>
<path d="M1796.6 792 L1810.1 792.0 Q1813.6 792 1813.6 795.5 L1813.6 819.9 Q1813.6 823.4 1817.1 823.4 L1825 823.4" fill="none" stroke="#333" stroke-width="1.2"/>
<polygon points="1830,823.4 1824.4,820.3 1824.4,826.5" fill="#000"/>
<rect x="1767.4" y="820.5" width="20.2" height="29" fill="#fff" stroke="#111" stroke-width="1.3"/>
<text x="1769.3" y="841.6" font-size="15" fill="#1414f0" text-anchor="start">k</text>
<text x="1776.6" y="839.4" font-size="12" fill="#1414f0" text-anchor="start" textLength="10" lengthAdjust="spacing">≫</text>
<rect x="1500.5" y="833.9" width="39.6" height="16.2" rx="0.7" fill="#fff" stroke="#7d7d7d" stroke-width="1"/>
<text x="1516.55" y="845.7" font-size="13" fill="#1414f0" text-anchor="start" textLength="7.5" lengthAdjust="spacing">4</text>
<path d="M1540.6 841.6 L1762 841.6" fill="none" stroke="#1c1c1c" stroke-width="1.1"/>
<polygon points="1767,841.6 1761.4,838.5 1761.4,844.7" fill="#000"/>
<path d="M1788 835.2 L1825 835.2" fill="none" stroke="#333" stroke-width="1.2"/>
<polygon points="1830,835.2 1824.4,832.1 1824.4,838.3000000000001" fill="#000"/>
<rect x="1830.2" y="814.4" width="21" height="29.5" fill="#fff" stroke="#111" stroke-width="1.2"/>
<rect x="1832.0" y="821.0" width="4.4" height="4.4" fill="#9ad84a" stroke="#1f8a1f" stroke-width="1"/>
<rect x="1832.0" y="832.1999999999999" width="4.4" height="4.4" fill="#9a9ae4" stroke="#7a7ac8" stroke-width="0.8"/>
<path d="M1837.7 823.4H1841.2L1845.2 829.6H1851.2" fill="none" stroke="#0a7d14" stroke-width="2.3"/>
<path d="M1851 829 L1903 829" fill="none" stroke="#5a5a5a" stroke-width="1.4"/>
<polygon points="1908,829 1902.4,825.9 1902.4,832.1" fill="#000"/>
<path d="M486 738.5H495.5V748H486M495.5 743.3H503.5" fill="none" stroke="#222" stroke-width="1.2"/>
<text x="726.4" y="599" font-size="13" fill="#000" text-anchor="start" textLength="189" lengthAdjust="spacing">/8/AIRFUELRATIO_IMPL_Afr_calc</text>
<text x="694" y="637" font-size="13" fill="#1414f0" text-anchor="start" textLength="52" lengthAdjust="spacing">_t1sint16</text>
<text x="485.8" y="729" font-size="13" fill="#000" text-anchor="start" textLength="188.6" lengthAdjust="spacing">/7/AIRFUELRATIO_IMPL_Afr_calc</text>
<text x="485.5" y="767" font-size="13" fill="#1414f0" text-anchor="start" textLength="98.5" lengthAdjust="spacing">bdaReqCorr_CUR</text>
<text x="1134.7" y="639.8" font-size="13" fill="#1414f0" text-anchor="start" textLength="153.3" lengthAdjust="spacing">Afr_flgLambdaReqOverride</text>
<text x="1134.7" y="692" font-size="13" fill="#1414f0" text-anchor="start" textLength="131.6" lengthAdjust="spacing">Afr_facLambdaReqMan</text>
<text x="1206.2" y="729" font-size="13" fill="#000" text-anchor="start" textLength="189" lengthAdjust="spacing">/9/AIRFUELRATIO_IMPL_Afr_calc</text>
<rect x="1135" y="754" width="132" height="16" fill="#00ffff"/>
<text x="1135.5" y="767" font-size="13" fill="#1414f0" text-anchor="start" textLength="131" lengthAdjust="spacing">Afr_facLambdaReqCalc</text>
<text x="1162.4" y="818.6" font-size="13" fill="#1414f0" text-anchor="start" textLength="75" lengthAdjust="spacing">Afr_facStoich</text>
<text x="1530.2" y="647.6" font-size="13" fill="#000" text-anchor="start" textLength="196" lengthAdjust="spacing">/10/AIRFUELRATIO_IMPL_Afr_calc</text>
<text x="1470.2" y="685.8" font-size="13" fill="#1414f0" text-anchor="start" textLength="107" lengthAdjust="spacing">Afr_facLambdaReq</text>
<text x="1530.2" y="729" font-size="13" fill="#000" text-anchor="start" textLength="196" lengthAdjust="spacing">/11/AIRFUELRATIO_IMPL_Afr_calc</text>
<text x="1497.7" y="766.6" font-size="13" fill="#1414f0" text-anchor="start" textLength="52.3" lengthAdjust="spacing">_t1uint32</text>
<text x="1878.4" y="778.6" font-size="13" fill="#1414f0" text-anchor="start" textLength="134" lengthAdjust="spacing">Afr_flgLambdaReqLimit</text>
<text x="1878.4" y="852.6" font-size="13" fill="#1414f0" text-anchor="start" textLength="124" lengthAdjust="spacing">Afr_facLambdaReqLim</text>
<text x="1878.4" y="904" font-size="13" fill="#1414f0" text-anchor="start" textLength="128" lengthAdjust="spacing">Afr_facLambdaReqMax</text>
</svg></div>
</section>
<section aria-label="Outline thumbnail and callout markers">
<svg width="480" height="100" viewBox="0 800 480 100" style="left:0;top:800px"><rect x="9.5" y="812.5" width="460" height="77" fill="#eef4f1" stroke="#d6dedb"/><rect x="31.5" y="815.5" width="416" height="68.5" fill="none" stroke="#d0d0d0" stroke-dasharray="2 1.5" stroke-width="0.8"/><rect x="35" y="819.5" width="409" height="61" fill="#fff" stroke="#000" stroke-width="1.6"/><path d="M43 825.5H47V829.5H43ZM75 825.5H79V829.5H75ZM107 825.5H111V829.5H107ZM139.5 825.5H143.5V829.5H139.5Z" stroke="#1a1a1a" fill="none" stroke-width="1.05" fill="#fff"/><path d="M170 825.4H197M224 825.4H256" stroke="#111" stroke-width="1.3" fill="none"/><path d="M54 842H74Q75.5 842 75.5 844V847.5M54 848.4H75.5H86M54 854.6H73.5Q75.5 854.6 75.5 852.6V849M86 846H91.5V851H86ZM91.5 847.6H100Q102.5 847.6 102.5 845.6V842.4Q102.5 841 104.5 841H123M86 842.4H101M91.5 849.2H124" stroke="#1a1a1a" fill="none" stroke-width="1.05"/><circle cx="123.4" cy="841.6" r="1.5" stroke="#1a1a1a" fill="none" stroke-width="1.05"/><circle cx="167.6" cy="841.6" r="1.3" stroke="#1a1a1a" fill="none" stroke-width="1.05"/><circle cx="206.4" cy="841.6" r="1.3" stroke="#1a1a1a" fill="none" stroke-width="1.05"/><path d="M125 841.5H166M169 841.5H205M167.6 843V852.5" stroke="#1a1a1a" fill="none" stroke-width="1.05"/><path d="M120 855.6H147.5V852.6H163M147.5 855.6V874.4H120M163 854H169V859H163ZM169 856.6H186Q187.5 856.6 187.5 855V853Q187.5 851.6 189 851.6H204.5Q206.4 851.6 206.4 850V843" stroke="#1a1a1a" fill="none" stroke-width="1.05"/><path d="M87 861H101Q103 861 103 863V864.6H122M87 867.4H121M121 863.6H126.5V868.6H121ZM126.5 865H146.5V857.6H163M126.5 867.4H164" stroke="#1a1a1a" fill="none" stroke-width="1.05"/><path d="M54 842H58M54 848.4H58M54 854.6H58M86 861H90M86 867.4H90M120 855.6H124M120 874.4H124M160 867.4H164M199 857.6H203M119 849.2H124" stroke="#000" stroke-width="1.8" fill="none"/><rect x="203" y="836.5" width="173" height="46.5" rx="2.5" fill="#e4e4f8" stroke="#3a3f5c" stroke-width="1.1"/><path d="M208 841.5H258M230 835.2H256Q257.4 835.2 257.4 837V857.6M230 849.4H258.5M230 859.6H259M258 841.8H276.5V858M263 845.6H270V857.6M260.5 857.6H275.5" stroke="#1a1a1a" fill="none" stroke-width="1.05"/><circle cx="260.4" cy="841.8" r="1.6" stroke="#1a1a1a" fill="none" stroke-width="1.05"/><circle cx="260.4" cy="848.6" r="1.6" stroke="#1a1a1a" fill="none" stroke-width="1.05"/><circle cx="260.4" cy="858.8" r="1.6" stroke="#1a1a1a" fill="none" stroke-width="1.05"/><circle cx="268.6" cy="857.8" r="1.6" stroke="#1a1a1a" fill="none" stroke-width="1.05"/><circle cx="276.4" cy="857.4" r="1.6" stroke="#1a1a1a" fill="none" stroke-width="1.05"/><path d="M228 833.6H232V835.8H228ZM228 848.2H232V850.4H228ZM228 858.4H232V860.6H228ZM258 852.2H262V854.4H258ZM267 844.8H271V847H267Z" stroke="#1a1a1a" fill="none" stroke-width="1.05" stroke-width="0.8"/><path d="M278 857.4H313M288 842H315Q317 842 317 844V847.6M288 848.4H314M288 863.6H315Q317.4 863.6 317.4 861.6V858.6M313.6 848.4V857.4M318.8 847.8H330M319 857.4H357" stroke="#1a1a1a" fill="none" stroke-width="1.05"/><circle cx="317" cy="847.8" r="1.7" stroke="#1a1a1a" fill="none" stroke-width="1.05"/><circle cx="317" cy="857.6" r="1.7" stroke="#1a1a1a" fill="none" stroke-width="1.05"/><path d="M327 840.8H354Q355.6 840.8 355.6 842.6V857.4M354 857.4V868.4H358M327 869.6H357M358 863.4H364V866.6M361 858.6Q366.8 858.6 366.8 862V866" stroke="#1a1a1a" fill="none" stroke-width="1.05"/><circle cx="359.4" cy="858" r="1.7" stroke="#1a1a1a" fill="none" stroke-width="1.05"/><circle cx="359.4" cy="868.6" r="1.7" stroke="#1a1a1a" fill="none" stroke-width="1.05"/><circle cx="366.8" cy="867.8" r="1.7" stroke="#1a1a1a" fill="none" stroke-width="1.05"/><path d="M326 839.6H331V842H326ZM326 868.4H331V870.8H326ZM356.4 862.4H361V864.6H356.4Z" stroke="#1a1a1a" fill="none" stroke-width="1.05" stroke-width="0.8"/><path d="M288 842H292M288 848.4H292M288 857.4H292M288 863.6H292M326 847.8H331M326 857.4H331M229 841.5H233M199 863.6H203" stroke="#000" stroke-width="1.8" fill="none"/><path d="M378 858.6H405Q406.8 858.6 406.8 860.4V871M378 867.6H392M378 874H404M392 867.6H406M408.6 872.4H418" stroke="#1a1a1a" fill="none" stroke-width="1.05"/><circle cx="406.8" cy="873.4" r="1.7" stroke="#1a1a1a" fill="none" stroke-width="1.05"/><path d="M378 858.6H382M378 867.6H382M378 874H382M413 872.4H418" stroke="#000" stroke-width="1.8" fill="none"/></svg>
<svg width="1914" height="932" viewBox="0 0 1914 932" style="pointer-events:none"><line x1="82.7" y1="30" x2="81.9" y2="238" stroke="#1f539f" stroke-width="2.2"/><circle cx="83.1" cy="19" r="13.5" fill="#1f539f"/><text x="83.1" y="24.2" font-size="14.5" font-weight="bold" fill="#fff" text-anchor="middle" font-family="'Liberation Sans', Arial, sans-serif">1</text><line x1="1127.5" y1="30" x2="1127.6" y2="278.5" stroke="#1f539f" stroke-width="2.2"/><circle cx="1128.2" cy="19" r="13.5" fill="#1f539f"/><text x="1128.2" y="24.2" font-size="14.5" font-weight="bold" fill="#fff" text-anchor="middle" font-family="'Liberation Sans', Arial, sans-serif">2</text><line x1="1251.6" y1="30" x2="1248.1" y2="753.4" stroke="#1f539f" stroke-width="2.2"/><circle cx="1252.3" cy="19" r="13.5" fill="#1f539f"/><text x="1252.3" y="24.2" font-size="14.5" font-weight="bold" fill="#fff" text-anchor="middle" font-family="'Liberation Sans', Arial, sans-serif">3</text></svg>
</section>
</body></html>
